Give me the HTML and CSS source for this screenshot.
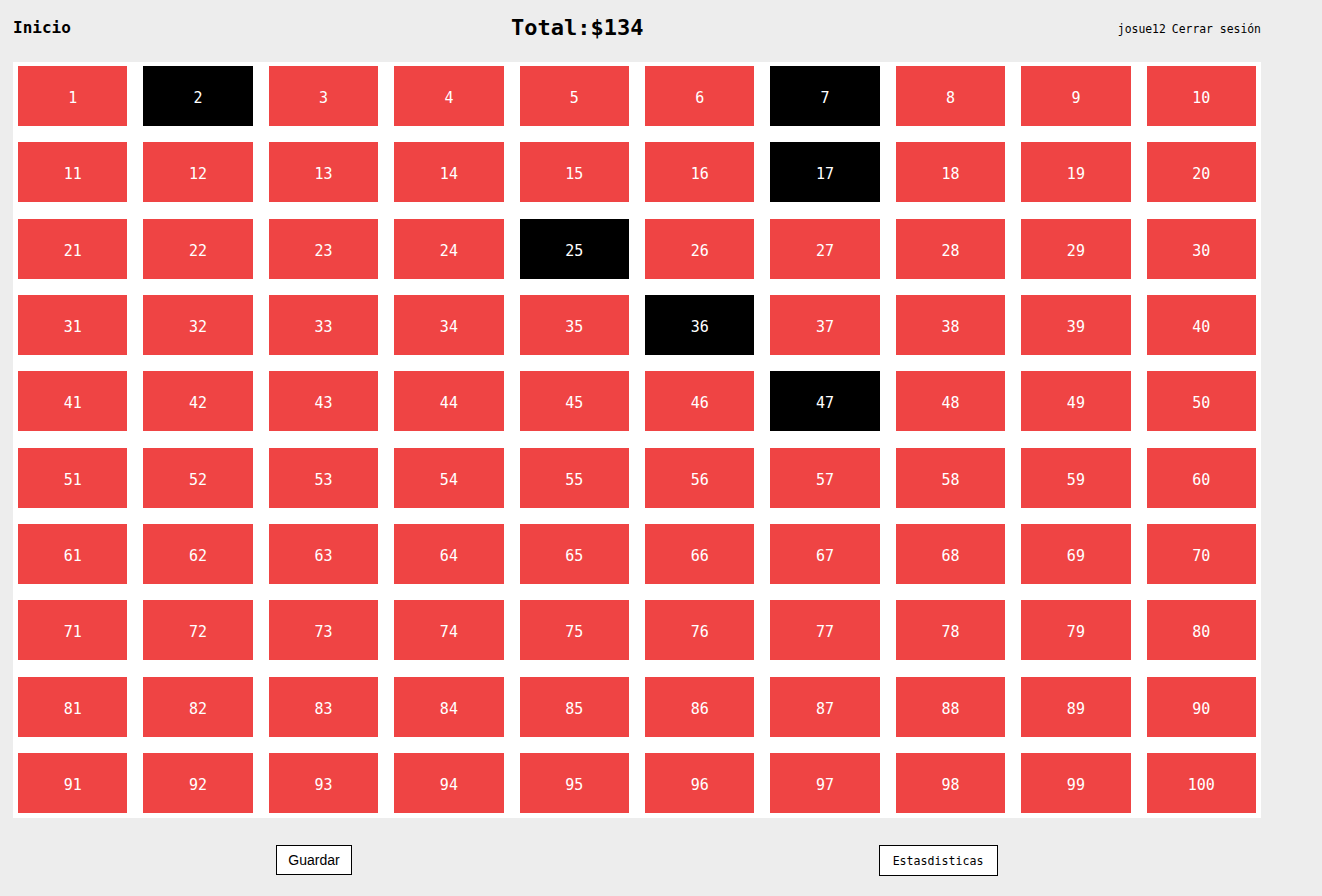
FILE: index.html
```html
<!DOCTYPE html>
<html lang="es">
<head>
  <meta charset="UTF-8">
  <title>Tablero</title>
  <link rel="stylesheet" href="styles.css">
</head>
<body>

<div class="page">
  <div class="header">
    <a class="home" href="#">Inicio</a>
    <h1 class="total">Total:$134</h1>
    <div class="user">
      <span>josue12</span>
      <a href="#">Cerrar sesión</a>
    </div>
  </div>

  <div class="board">
    <div class="cell">1</div><div class="cell taken">2</div><div class="cell">3</div><div class="cell">4</div><div class="cell">5</div>
    <div class="cell">6</div><div class="cell taken">7</div><div class="cell">8</div><div class="cell">9</div><div class="cell">10</div>
    <div class="cell">11</div><div class="cell">12</div><div class="cell">13</div><div class="cell">14</div><div class="cell">15</div>
    <div class="cell">16</div><div class="cell taken">17</div><div class="cell">18</div><div class="cell">19</div><div class="cell">20</div>
    <div class="cell">21</div><div class="cell">22</div><div class="cell">23</div><div class="cell">24</div><div class="cell taken">25</div>
    <div class="cell">26</div><div class="cell">27</div><div class="cell">28</div><div class="cell">29</div><div class="cell">30</div>
    <div class="cell">31</div><div class="cell">32</div><div class="cell">33</div><div class="cell">34</div><div class="cell">35</div>
    <div class="cell taken">36</div><div class="cell">37</div><div class="cell">38</div><div class="cell">39</div><div class="cell">40</div>
    <div class="cell">41</div><div class="cell">42</div><div class="cell">43</div><div class="cell">44</div><div class="cell">45</div>
    <div class="cell">46</div><div class="cell taken">47</div><div class="cell">48</div><div class="cell">49</div><div class="cell">50</div>
    <div class="cell">51</div><div class="cell">52</div><div class="cell">53</div><div class="cell">54</div><div class="cell">55</div>
    <div class="cell">56</div><div class="cell">57</div><div class="cell">58</div><div class="cell">59</div><div class="cell">60</div>
    <div class="cell">61</div><div class="cell">62</div><div class="cell">63</div><div class="cell">64</div><div class="cell">65</div>
    <div class="cell">66</div><div class="cell">67</div><div class="cell">68</div><div class="cell">69</div><div class="cell">70</div>
    <div class="cell">71</div><div class="cell">72</div><div class="cell">73</div><div class="cell">74</div><div class="cell">75</div>
    <div class="cell">76</div><div class="cell">77</div><div class="cell">78</div><div class="cell">79</div><div class="cell">80</div>
    <div class="cell">81</div><div class="cell">82</div><div class="cell">83</div><div class="cell">84</div><div class="cell">85</div>
    <div class="cell">86</div><div class="cell">87</div><div class="cell">88</div><div class="cell">89</div><div class="cell">90</div>
    <div class="cell">91</div><div class="cell">92</div><div class="cell">93</div><div class="cell">94</div><div class="cell">95</div>
    <div class="cell">96</div><div class="cell">97</div><div class="cell">98</div><div class="cell">99</div><div class="cell">100</div>
  </div>
</div>

<div class="actions">
  <div class="slot"><button class="btn-save">Guardar</button></div>
  <div class="slot"><button class="btn-stats">Estasdisticas</button></div>
</div>

</body>
</html>
```

FILE: styles.css
```css
body {
  margin: 0;
  background-color: #ededed;
  color: #000;
  font-family: "DejaVu Sans Mono", "Liberation Mono", monospace;
}
.page {
  width: 1248px;
  margin-left: 13px;
}
.header {
  height: 56px;
  display: flex;
  align-items: center;
  justify-content: space-between;
}
.home {
  color: #000;
  text-decoration: none;
  font-weight: bold;
  font-size: 16px;
  margin-top: -1px;
}
.total {
  margin: -1px 34px 0 0;
  font-size: 22px;
  font-weight: bold;
}
.user {
  font-size: 11.4px;
  display: flex;
  gap: 6px;
  margin-top: 1px;
}
.user a {
  color: #000;
  text-decoration: none;
}
.board {
  margin-top: 6px;
  background-color: #fff;
  padding: 4px 5px 5px;
  display: grid;
  grid-template-columns: repeat(10, 1fr);
  grid-auto-rows: 60px;
  column-gap: 16px;
  row-gap: 16.33px;
}
.cell {
  background-color: #ef4444;
  color: #fff;
  font-size: 15px;
  padding-top: 4px;
  box-sizing: border-box;
  display: flex;
  align-items: center;
  justify-content: center;
}
.cell.taken {
  background-color: #000;
}
.actions {
  width: 1248px;
  margin-left: 2px;
  margin-top: 27px;
  display: grid;
  grid-template-columns: 1fr 1fr;
}
.slot {
  display: flex;
  justify-content: center;
  align-items: flex-start;
}
button {
  background-color: #fff;
  color: #000;
  border: 1px solid #000;
  border-radius: 0;
  cursor: pointer;
}
.btn-save {
  font-family: "Liberation Sans", Arial, sans-serif;
  font-size: 14px;
  height: 30px;
  width: 76px;
}
.btn-stats {
  font-family: "DejaVu Sans Mono", "Liberation Mono", monospace;
  font-size: 11.6px;
  height: 31px;
  width: 119px;
  padding-top: 2px;
}
```
